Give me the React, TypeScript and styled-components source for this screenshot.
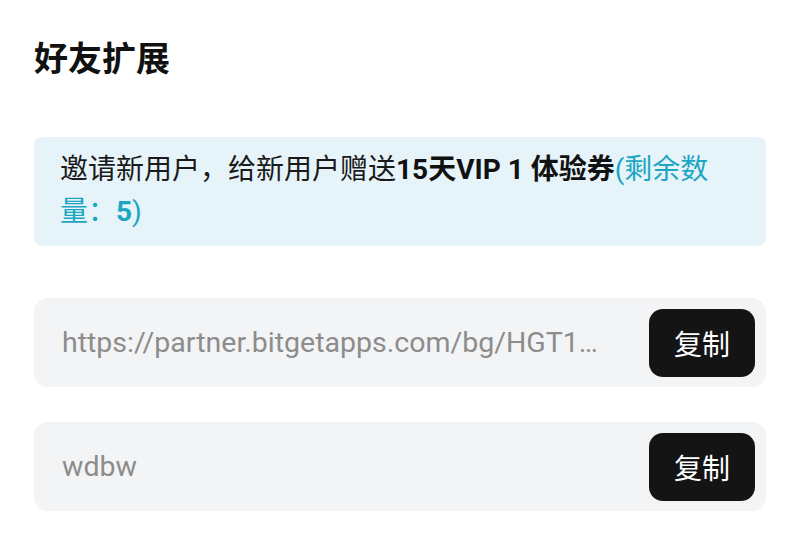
import React from "react"
import styled, { createGlobalStyle } from "styled-components"

const GlobalStyle = createGlobalStyle`
  html, body {
    margin: 0;
    padding: 0;
    background: #ffffff;
  }
  body {
    font-family: Roboto, "Noto Sans CJK SC", sans-serif;
    -webkit-font-smoothing: antialiased;
  }
`

const Page = styled.div`
  width: 800px;
  height: 538px;
  box-sizing: border-box;
  padding: 37px 34px 0 34px;
  display: flex;
  flex-direction: column;
  background: #ffffff;
`

const Title = styled.h1`
  margin: 0;
  font-size: 34px;
  line-height: 44px;
  font-weight: 700;
  color: #111111;
`

const Notice = styled.div`
  margin-top: 56px;
  background: #e6f4fa;
  border-radius: 8px;
  padding: 12px 46px 13px 26px;
  font-size: 28px;
  line-height: 42px;
  color: #1a1a1a;
`

const Strong = styled.b`
  font-weight: 700;
  color: #111111;
`

const Accent = styled.span`
  color: #1ca6c2;
`

const AccentBold = styled.b`
  font-weight: 700;
`

const Field = styled.div<{ $gap: number }>`
  margin-top: ${(p) => p.$gap}px;
  height: 89px;
  background: #f3f4f6;
  border-radius: 14px;
  display: flex;
  align-items: center;
  padding: 0 11px 0 28px;
  box-sizing: border-box;
  gap: 20px;
`

const FieldText = styled.div`
  flex: 1;
  min-width: 0;
  font-size: 28.5px;
  color: #8c8c8c;
  white-space: nowrap;
  overflow: hidden;
  text-overflow: ellipsis;
`

const CopyButton = styled.button`
  flex: none;
  width: 106px;
  height: 68px;
  border: none;
  border-radius: 14px;
  background: #141414;
  color: #ffffff;
  font-family: "Noto Sans CJK SC", sans-serif;
  font-size: 28px;
  display: flex;
  align-items: center;
  justify-content: center;
  cursor: pointer;
  padding: 0;
`

const fields = [
  { value: "https://partner.bitgetapps.com/bg/HGT1…", gap: 52 },
  { value: "wdbw", gap: 35 },
]

const App = () => {
  return (
    <Page>
      <GlobalStyle />
      <Title>好友扩展</Title>
      <Notice>
        邀请新用户，给新用户赠送<Strong>15天VIP 1 体验券</Strong>
        <Accent>
          (剩余数量：<AccentBold>5</AccentBold>)
        </Accent>
      </Notice>
      {fields.map((f, i) => (
        <Field key={`field_${i}`} $gap={f.gap}>
          <FieldText>{f.value}</FieldText>
          <CopyButton>复制</CopyButton>
        </Field>
      ))}
    </Page>
  )
}

export default App
